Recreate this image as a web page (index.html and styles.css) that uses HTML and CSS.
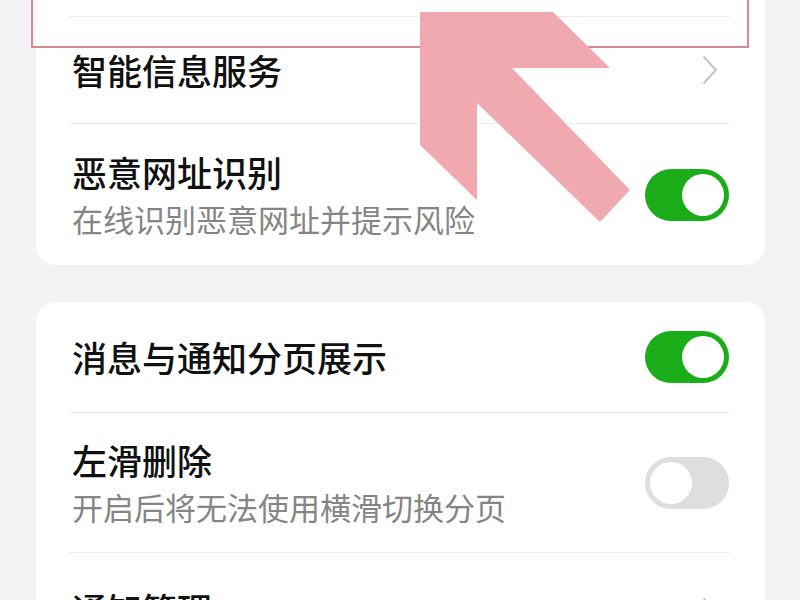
FILE: index.html
```html
<!DOCTYPE html>
<html lang="zh-CN">
<head>
<meta charset="utf-8">
<title>设置</title>
<link rel="stylesheet" href="styles.css">
</head>
<body>
<div class="page">
  <div class="card card-top">
    <div class="row-clip"></div>
    <div class="divider"></div>
    <div class="row row-link">
      <span class="title">智能信息服务</span>
      <svg class="chev" width="16" height="30" viewBox="0 0 16 30"><path d="M1.5 1.5 L14 15 L1.5 28.5" fill="none" stroke="#c4c4c4" stroke-width="2"/></svg>
    </div>
    <div class="divider"></div>
    <div class="row row-sub">
      <div class="texts">
        <div class="title">恶意网址识别</div>
        <div class="sub">在线识别恶意网址并提示风险</div>
      </div>
      <div class="toggle on"><span class="knob"></span></div>
    </div>
  </div>

  <div class="card card-second">
    <div class="row row-first">
      <span class="title">消息与通知分页展示</span>
      <div class="toggle on"><span class="knob"></span></div>
    </div>
    <div class="divider"></div>
    <div class="row row-sub row-sub2">
      <div class="texts">
        <div class="title">左滑删除</div>
        <div class="sub">开启后将无法使用横滑切换分页</div>
      </div>
      <div class="toggle"><span class="knob"></span></div>
    </div>
    <div class="divider"></div>
    <div class="row row-link row-last">
      <span class="title">通知管理</span>
      <svg class="chev" width="16" height="30" viewBox="0 0 16 30"><path d="M1.5 1.5 L14 15 L1.5 28.5" fill="none" stroke="#c4c4c4" stroke-width="2"/></svg>
    </div>
  </div>

  <div class="highlight-box"></div>
  <svg class="arrow" width="800" height="600" viewBox="0 0 800 600">
    <polygon points="420,12 553,12 610,68 512,68 630,190 600,222 477,103 477,200 420,145" fill="#f0a9ae"/>
  </svg>
</div>
</body>
</html>
```

FILE: styles.css
```css
html, body {
  margin: 0;
  padding: 0;
  background: #f3f3f5;
  overflow: hidden;
}

body {
  font-family: "Noto Sans CJK SC", "Noto Sans", sans-serif;
  width: 800px;
  height: 600px;
}

.page {
  position: relative;
  width: 800px;
  height: 600px;
  overflow: hidden;
}

.card {
  background: #ffffff;
  margin-left: 36px;
  width: 729px;
  display: flex;
  flex-direction: column;
}

.card-top {
  border-radius: 0 0 20px 20px;
}

.card-second {
  margin-top: 37px;
  border-radius: 20px 20px 0 0;
}

.row-clip {
  height: 16px;
}

.divider {
  height: 1px;
  background: #ededee;
  margin: 0 35px 0 33px;
}

.row {
  display: flex;
  align-items: center;
  justify-content: space-between;
  padding: 0 36px 0 36px;
}

.row-link {
  height: 106px;
  padding-right: 47px;
}

.row-sub {
  height: 141px;
}

.row-sub2 {
  height: 139px;
}

.row-first {
  height: 110px;
}

.row-last {
  height: 106px;
  align-items: flex-start;
  padding-top: 34px;
  box-sizing: border-box;
}

.texts {
  display: flex;
  flex-direction: column;
}

.title {
  font-size: 35px;
  line-height: 44px;
  font-weight: 500;
  color: #111111;
}

.sub {
  font-size: 31px;
  line-height: 40px;
  color: #858585;
  margin-top: 5px;
}

.chev {
  display: block;
}

.row-last .chev {
  margin-top: 10px;
}

.toggle {
  width: 84px;
  height: 52px;
  border-radius: 26px;
  background: #dedede;
  position: relative;
  flex: none;
  display: flex;
  align-items: center;
  padding: 0 5px;
  box-sizing: border-box;
}

.toggle.on {
  background: #1aad19;
  justify-content: flex-end;
}

.knob {
  width: 42px;
  height: 42px;
  border-radius: 50%;
  background: #ffffff;
}

.highlight-box {
  position: absolute;
  left: 31px;
  top: -10px;
  width: 714px;
  height: 54px;
  border: 2px solid #d08c92;
}

.arrow {
  position: absolute;
  left: 0;
  top: 0;
  pointer-events: none;
}
```
